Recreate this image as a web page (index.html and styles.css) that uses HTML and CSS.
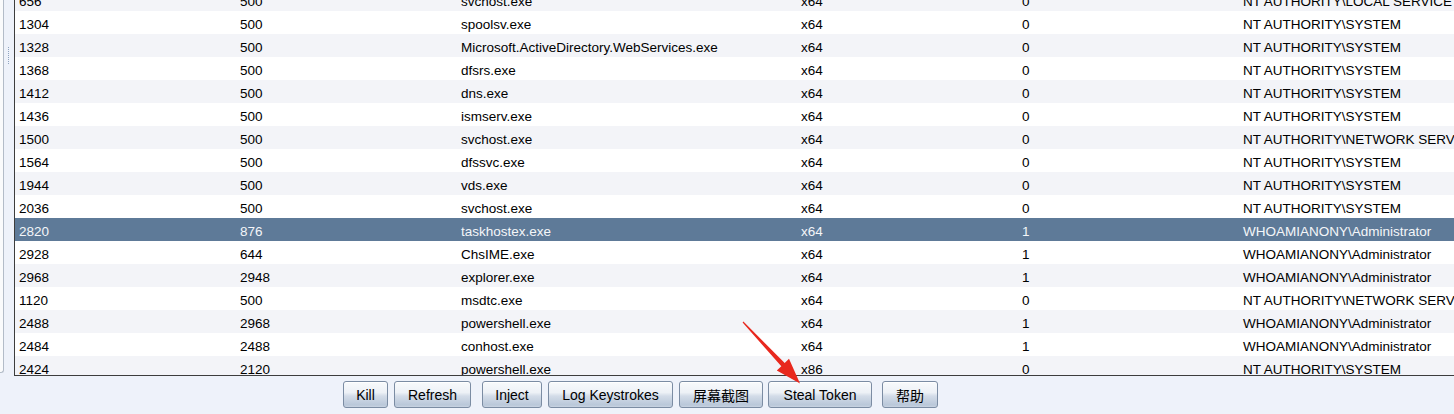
FILE: index.html
```html
<!DOCTYPE html>
<html>
<head>
<meta charset="utf-8">
<link rel="stylesheet" href="styles.css">
</head>
<body>
<div class="app">
  <div class="main">
    <div class="side">
      <div class="side-panel"></div>
      <div class="splitter"><div class="grip"></div></div>
    </div>
    <div class="table-wrap">
      <div class="rows">
        <div class="row alt"><span>656</span><span>500</span><span>svchost.exe</span><span>x64</span><span>0</span><span>NT AUTHORITY\LOCAL SERVICE</span></div>
        <div class="row"><span>1304</span><span>500</span><span>spoolsv.exe</span><span>x64</span><span>0</span><span>NT AUTHORITY\SYSTEM</span></div>
        <div class="row alt"><span>1328</span><span>500</span><span>Microsoft.ActiveDirectory.WebServices.exe</span><span>x64</span><span>0</span><span>NT AUTHORITY\SYSTEM</span></div>
        <div class="row"><span>1368</span><span>500</span><span>dfsrs.exe</span><span>x64</span><span>0</span><span>NT AUTHORITY\SYSTEM</span></div>
        <div class="row alt"><span>1412</span><span>500</span><span>dns.exe</span><span>x64</span><span>0</span><span>NT AUTHORITY\SYSTEM</span></div>
        <div class="row"><span>1436</span><span>500</span><span>ismserv.exe</span><span>x64</span><span>0</span><span>NT AUTHORITY\SYSTEM</span></div>
        <div class="row alt"><span>1500</span><span>500</span><span>svchost.exe</span><span>x64</span><span>0</span><span>NT AUTHORITY\NETWORK SERVICE</span></div>
        <div class="row"><span>1564</span><span>500</span><span>dfssvc.exe</span><span>x64</span><span>0</span><span>NT AUTHORITY\SYSTEM</span></div>
        <div class="row alt"><span>1944</span><span>500</span><span>vds.exe</span><span>x64</span><span>0</span><span>NT AUTHORITY\SYSTEM</span></div>
        <div class="row"><span>2036</span><span>500</span><span>svchost.exe</span><span>x64</span><span>0</span><span>NT AUTHORITY\SYSTEM</span></div>
        <div class="row selected"><span>2820</span><span>876</span><span>taskhostex.exe</span><span>x64</span><span>1</span><span>WHOAMIANONY\Administrator</span></div>
        <div class="row"><span>2928</span><span>644</span><span>ChsIME.exe</span><span>x64</span><span>1</span><span>WHOAMIANONY\Administrator</span></div>
        <div class="row alt"><span>2968</span><span>2948</span><span>explorer.exe</span><span>x64</span><span>1</span><span>WHOAMIANONY\Administrator</span></div>
        <div class="row"><span>1120</span><span>500</span><span>msdtc.exe</span><span>x64</span><span>0</span><span>NT AUTHORITY\NETWORK SERVICE</span></div>
        <div class="row alt"><span>2488</span><span>2968</span><span>powershell.exe</span><span>x64</span><span>1</span><span>WHOAMIANONY\Administrator</span></div>
        <div class="row"><span>2484</span><span>2488</span><span>conhost.exe</span><span>x64</span><span>1</span><span>WHOAMIANONY\Administrator</span></div>
        <div class="row alt"><span>2424</span><span>2120</span><span>powershell.exe</span><span>x86</span><span>0</span><span>NT AUTHORITY\SYSTEM</span></div>
      </div>
    </div>
  </div>
  <div class="toolbar">
    <button class="btn w-kill">Kill</button>
    <button class="btn w-refresh">Refresh</button>
    <button class="btn w-inject">Inject</button>
    <button class="btn w-log">Log Keystrokes</button>
    <button class="btn w-shot">屏幕截图</button>
    <button class="btn w-steal">Steal Token</button>
    <button class="btn w-help">帮助</button>
  </div>
  <svg class="annotation" width="1454" height="414" viewBox="0 0 1454 414">
    <polygon fill="#e8281e" points="742.6,322.4 781.3,366.3 776.8,370.5 800,383.5 789,358.8 784.7,363.1 743.4,321.6"/>
  </svg>
</div>
</body>
</html>
```
FILE: styles.css
```css
html, body {
  margin: 0;
  padding: 0;
}
body {
  width: 1454px;
  height: 414px;
  overflow: hidden;
  background: #eef2fa;
  font-family: "Liberation Sans", Arial, "Noto Sans CJK SC", sans-serif;
  font-size: 13.5px;
  color: #000;
}
.app {
  position: relative;
  width: 1454px;
  height: 414px;
  display: flex;
  flex-direction: column;
}
.main {
  display: flex;
  height: 376px;
}
.side {
  display: flex;
  width: 14px;
  flex: none;
}
.side-panel {
  width: 3px;
  height: 372px;
  background: #fafbfc;
  border-right: 1px solid #b3bcc8;
  border-bottom: 1px solid #b3bcc8;
  border-bottom-right-radius: 3px;
}
.splitter {
  flex: 1;
  padding-top: 47px;
  padding-left: 4px;
}
.grip {
  width: 0;
  height: 17px;
  border-left: 1px dotted #8ea3bf;
}
.table-wrap {
  flex: 1;
  min-width: 0;
  overflow: hidden;
  background: #fff;
  border-left: 1px solid #3d3d3d;
  border-bottom: 1px solid #3d3d3d;
}
.rows {
  margin-top: -12px;
  width: 1700px;
}
.row {
  display: grid;
  grid-template-columns: 221px 221px 340px 221px 221px 476px;
  height: 23px;
  background: #fff;
}
.row.alt {
  background: #f3f4f8;
}
.row.selected {
  background: #5e7a98;
  color: #f4f6f9;
}
.row span {
  padding: 4px 0 0 4px;
  line-height: 19px;
  white-space: nowrap;
  overflow: hidden;
}
.toolbar {
  flex: 1;
  display: flex;
  align-items: flex-start;
  gap: 6px;
  padding-top: 5px;
  padding-left: 343px;
}
.btn {
  height: 27px;
  padding: 1px 0 0;
  margin: 0;
  font-family: "Liberation Sans", Arial, "Noto Sans CJK SC", sans-serif;
  font-size: 14px;
  color: #000;
  border: 1px solid #7b8ca3;
  border-radius: 3px;
  background: linear-gradient(to bottom, #f8fafc 0%, #edf1f6 42%, #d3dce8 56%, #b9c7d9 92%, #c9d4e2 100%);
  box-shadow: inset 0 1px 0 #ffffff;
  text-align: center;
}
.w-kill { width: 45px; }
.w-refresh { width: 77px; }
.w-inject { width: 60px; margin-left: 5px; }
.w-log { width: 125px; }
.w-shot { width: 84px; }
.w-steal { width: 104px; margin-left: -1px; }
.w-help { width: 56px; margin-left: 4px; }
.annotation {
  position: absolute;
  left: 0;
  top: 0;
  pointer-events: none;
}
```
